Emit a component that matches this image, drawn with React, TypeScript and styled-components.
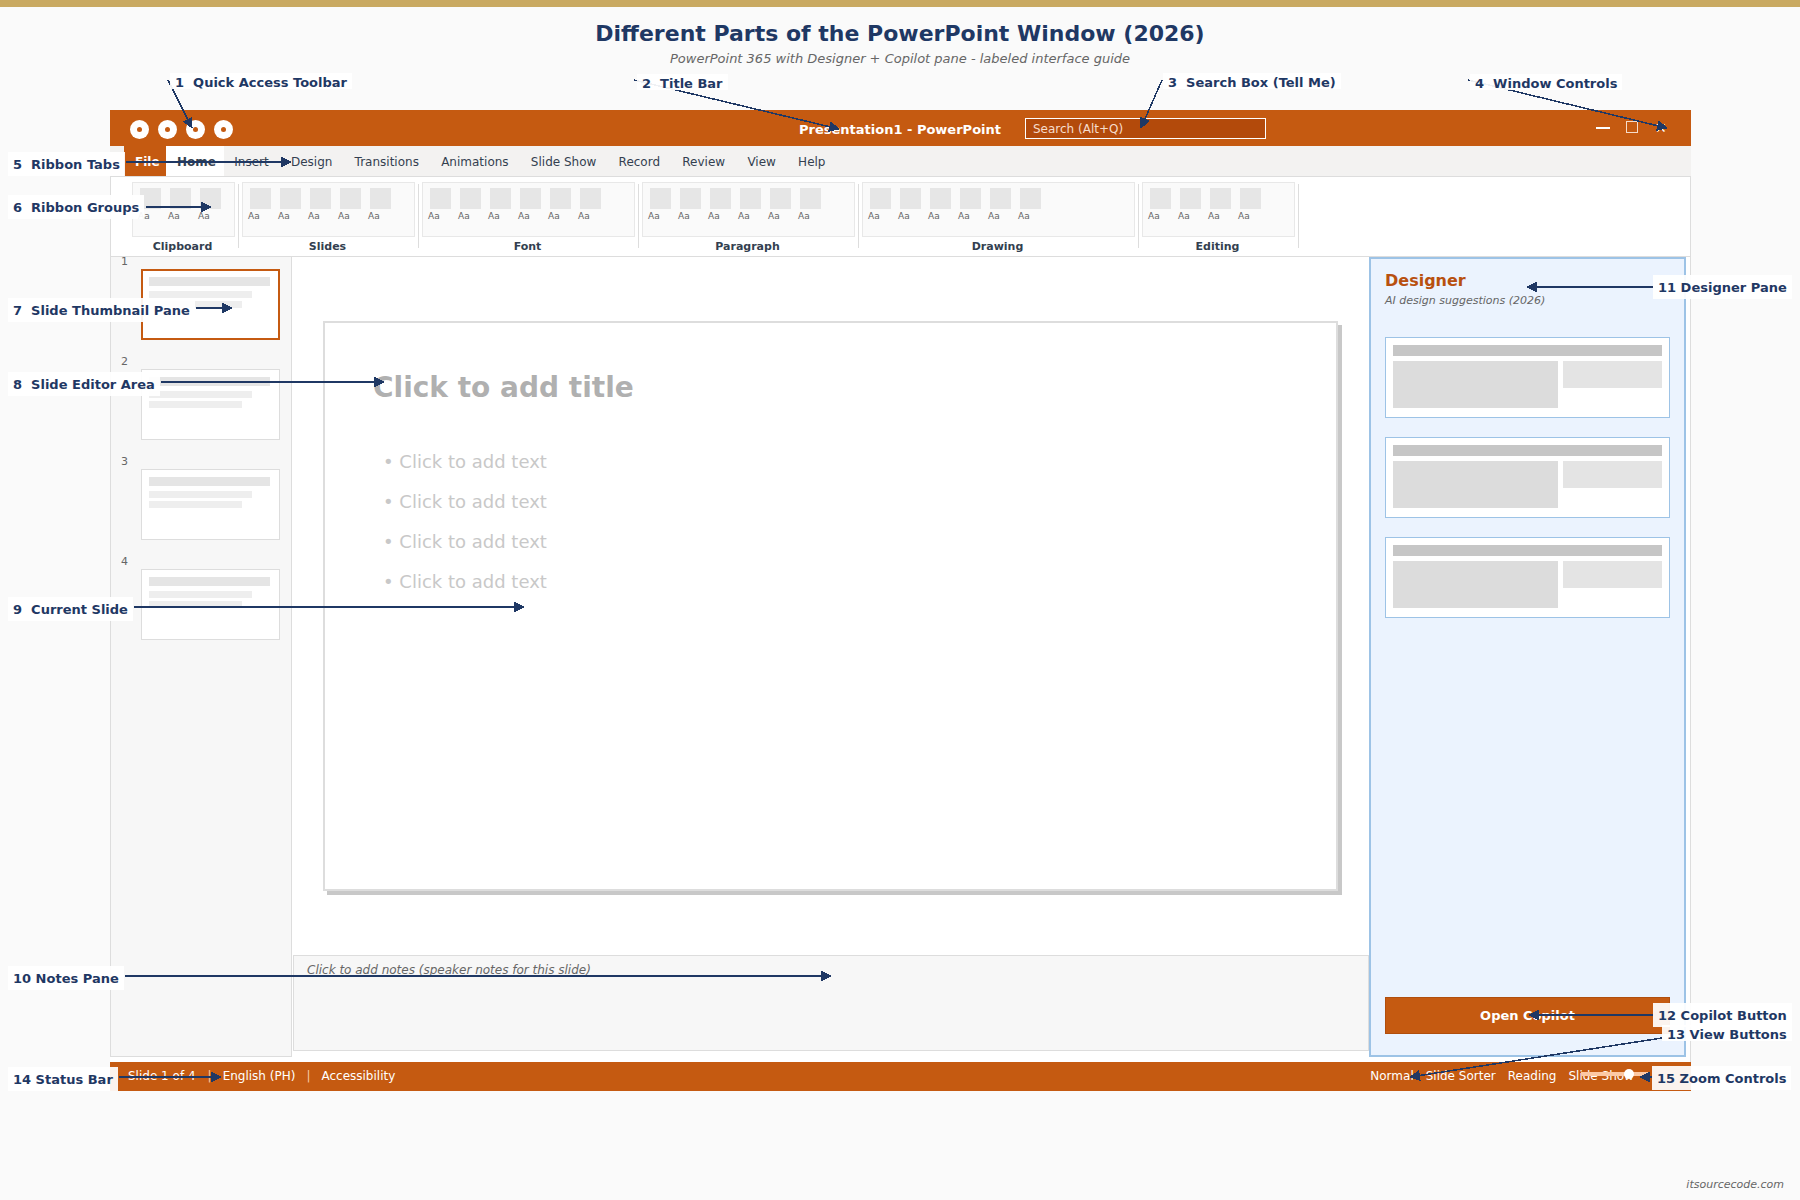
import styled, {createGlobalStyle} from "styled-components";

const ORANGE = "#c55a11";
const NAVY = "#1f3864";
const BLUE = "#9dc3e6";
const SLATE = "#333f50";

const GlobalStyle = createGlobalStyle`
  html, body {
    margin: 0;
    padding: 0;
    background: #fafafa;
  }
  * {
    box-sizing: border-box;
  }
`;

const Page = styled.div`
  position: relative;
  width: 1800px;
  height: 1200px;
  overflow: hidden;
  background: #fafafa;
  font-family: "DejaVu Sans", sans-serif;
`;
const TopStrip = styled.div`
  height: 7px;
  background: #c9a961;
`;
const Header = styled.header`
  height: 103px;
  text-align: center;
`;
const MainTitle = styled.h1`
  margin: 0;
  padding-top: 13px;
  font-size: 22px;
  line-height: 28px;
  font-weight: 700;
  color: ${NAVY};
`;
const SubTitle = styled.p`
  margin: 3px 0 0;
  font-size: 13px;
  line-height: 16px;
  font-style: italic;
  color: #666;
`;

const Window = styled.div`
  width: 1581px;
  margin-left: 110px;
`;
const TitleBar = styled.div`
  display: flex;
  align-items: flex-start;
  height: 36px;
  background: ${ORANGE};
`;
const QuickAccess = styled.div`
  display: flex;
  gap: 9px;
  width: 689px;
  margin-top: 10px;
  padding-left: 20px;
`;
const QuickDot = styled.span`
  display: flex;
  align-items: center;
  justify-content: center;
  width: 19px;
  height: 19px;
  border-radius: 50%;
  background: #fff;
  &::after {
    content: "";
    width: 5px;
    height: 5px;
    border-radius: 50%;
    background: ${ORANGE};
  }
`;
const DocTitle = styled.div`
  width: 202px;
  margin-top: 12px;
  font-size: 13px;
  font-weight: 700;
  line-height: 16px;
  color: #fff;
  text-align: center;
  white-space: nowrap;
`;
const SearchBox = styled.div`
  width: 241px;
  height: 21px;
  margin: 8px 0 0 24px;
  padding-left: 7px;
  border: 1px solid #fff;
  background: #b34a0b;
  font-size: 12px;
  line-height: 20px;
  color: #f6dccb;
`;
const WindowControls = styled.div`
  display: flex;
  align-items: flex-start;
  margin: 11px 0 0 330px;
`;
const MinButton = styled.span`
  width: 14px;
  height: 2px;
  margin-top: 6px;
  background: #fff;
`;
const MaxButton = styled.span`
  width: 12px;
  height: 12px;
  margin-left: 16px;
  border: 1px solid #f6dccb;
`;
const CloseButton = styled.span`
  margin-left: 17px;
  font-size: 14px;
  line-height: 14px;
  color: #fff;
`;

const TabRow = styled.nav`
  display: flex;
  height: 31px;
  padding-left: 14px;
  background: #f3f2f1;
  border-bottom: 1px solid #ddd;
`;
const Tab = styled.span`
  height: 30px;
  padding: 0 12px 0 10.25px;
  font-size: 12px;
  line-height: 32px;
  white-space: nowrap;
  color: ${SLATE};
`;
const FileTab = styled(Tab)`
  width: 42px;
  padding: 0 0 0 11px;
  font-weight: 700;
  color: #fff;
  background: ${ORANGE};
`;
const HomeTab = styled(Tab)`
  width: 58px;
  padding: 0 0 0 11px;
  font-weight: 700;
  background: #fff;
`;

const Ribbon = styled.div`
  display: flex;
  height: 80px;
  padding: 5px 0 0 21px;
  background: #fff;
  border-left: 1px solid #ddd;
  border-right: 1px solid #ddd;
  border-bottom: 1px solid #ddd;
`;
const RibbonGroup = styled.div<{$width: number}>`
  position: relative;
  width: ${(p) => p.$width}px;
  margin-right: 7px;
`;
const GroupBox = styled.div`
  display: flex;
  gap: 9px;
  height: 55px;
  padding: 5px 0 0 7px;
  background: #fafafa;
  border: 1px solid #e8e8e8;
`;
const RibbonItem = styled.div`
  width: 21px;
`;
const RibbonIcon = styled.div`
  height: 21px;
  background: #e6e6e6;
`;
const RibbonCaption = styled.div`
  margin: 2px 0 0 -2px;
  font-size: 9px;
  line-height: 10px;
  color: #666;
`;
const GroupLabel = styled.div`
  margin-top: 3px;
  padding-right: 2px;
  font-size: 11px;
  font-weight: 700;
  line-height: 13px;
  color: ${SLATE};
  text-align: center;
`;
const GroupSeparator = styled.span`
  position: absolute;
  top: 2px;
  right: -4px;
  width: 1px;
  height: 64px;
  background: #ddd;
`;

const Body = styled.div`
  display: flex;
  height: 805px;
  padding-right: 5px;
  background: #fff;
  border-right: 1px solid #ddd;
`;
const ThumbPane = styled.aside`
  flex: none;
  width: 182px;
  height: 800px;
  background: #f7f7f7;
  border: 1px solid #ddd;
  border-top: 0;
`;
const ThumbList = styled.div`
  margin-top: -2px;
`;
const ThumbItem = styled.div`
  height: 100px;
  padding-left: 30px;
`;
const ThumbNumber = styled.div`
  height: 14px;
  margin-left: -20px;
  font-size: 11px;
  line-height: 14px;
  color: #666;
`;
const Thumb = styled.div<{$current?: boolean}>`
  width: 139px;
  height: 71px;
  padding: ${(p) => (p.$current ? "6px" : "7px")};
  background: #fff;
  border: ${(p) => (p.$current ? `2px solid ${ORANGE}` : "1px solid #ddd")};
`;
const ThumbBar = styled.div<{$width: number; $strong?: boolean}>`
  width: ${(p) => p.$width}px;
  height: ${(p) => (p.$strong ? 9 : 7)}px;
  margin-bottom: ${(p) => (p.$strong ? 5 : 3)}px;
  background: ${(p) => (p.$strong ? "#e5e5e5" : "#eee")};
`;

const Editor = styled.main`
  flex: none;
  display: flex;
  flex-direction: column;
  width: 1077px;
  height: 800px;
`;
const SlideCanvas = styled.section`
  width: 1015px;
  height: 570px;
  margin: 64px 0 64px 31px;
  padding: 48px 0 0 48px;
  background: #fff;
  border: 2px solid #ddd;
  box-shadow: 4px 4px 0 #c8c8c8;
`;
const SlideTitle = styled.h2`
  margin: 0 0 37px;
  font-size: 28px;
  line-height: 34px;
  font-weight: 700;
  color: #b0b0b0;
`;
const SlideBullet = styled.div`
  height: 40px;
  padding-left: 10px;
  font-size: 18px;
  line-height: 40px;
  color: #c8c8c8;
`;
const NotesPane = styled.section`
  height: 96px;
  margin-left: 1px;
  padding: 7px 13px;
  background: #f7f7f7;
  border: 1px solid #ddd;
  font-size: 12px;
  font-style: italic;
  line-height: 15px;
  color: #666;
`;

const DesignerPane = styled.aside`
  flex: none;
  display: flex;
  flex-direction: column;
  width: 317px;
  height: 800px;
  padding: 13px 14px 21px;
  background: #ebf3fe;
  border: 2px solid ${BLUE};
`;
const DesignerTitle = styled.h3`
  margin: 0;
  font-size: 16px;
  line-height: 18px;
  font-weight: 700;
  color: #b8500f;
`;
const DesignerSub = styled.p`
  margin: 4px 0 0;
  font-size: 11px;
  font-style: italic;
  line-height: 14px;
  color: #666;
`;
const SuggestionList = styled.div`
  display: flex;
  flex-direction: column;
  gap: 19px;
  margin-top: 29px;
`;
const SuggestionCard = styled.div`
  display: grid;
  grid-template-columns: 165px 99px;
  grid-template-rows: 11px 27px 20px;
  column-gap: 5px;
  row-gap: 5px;
  height: 81px;
  padding: 7px;
  background: #fff;
  border: 1px solid ${BLUE};
`;
const CardHeader = styled.div`
  grid-column: 1 / 3;
  background: #c6c6c6;
`;
const CardImage = styled.div`
  grid-row: 2 / 4;
  height: 47px;
  background: #dcdcdc;
`;
const CardText = styled.div`
  background: #e4e4e4;
`;
const CopilotButton = styled.button`
  width: 285px;
  height: 37px;
  margin-top: auto;
  padding: 0;
  background: ${ORANGE};
  border: 1px solid #b04e0d;
  font-family: inherit;
  font-size: 13px;
  font-weight: 700;
  color: #fff;
`;

const StatusBar = styled.footer`
  position: relative;
  display: flex;
  align-items: center;
  height: 29px;
  padding: 0 0 2px 18px;
  background: ${ORANGE};
  font-size: 12px;
  color: #fff;
`;
const StatusItem = styled.span<{$left: number}>`
  margin-left: ${(p) => p.$left}px;
  white-space: nowrap;
`;
const StatusDivider = styled.span<{$left: number}>`
  margin-left: ${(p) => p.$left}px;
  color: #f6c9a8;
`;
const ZoomTrack = styled.div`
  position: absolute;
  left: 1471px;
  top: 10px;
  width: 69px;
  height: 4px;
  background: #fcc8a4;
`;
const ZoomKnob = styled.span`
  position: absolute;
  left: 43px;
  top: -3px;
  width: 10px;
  height: 10px;
  border-radius: 50%;
  background: #fff;
`;

const ArrowLayer = styled.svg`
  position: absolute;
  left: 0;
  top: 0;
  pointer-events: none;
`;
const Callout = styled.div<{$x: number; $y: number; $compact?: boolean}>`
  position: absolute;
  left: ${(p) => p.$x - 5}px;
  top: ${(p) => p.$y - (p.$compact ? 10 : 13)}px;
  height: ${(p) => (p.$compact ? 16 : 24)}px;
  padding: ${(p) => (p.$compact ? "0 5px" : "3px 5px 1px")};
  background: rgba(255, 255, 255, 0.93);
  font-size: 13px;
  font-weight: 700;
  line-height: 20px;
  white-space: pre;
  color: ${NAVY};
`;
const Watermark = styled.div`
  position: absolute;
  right: 16px;
  bottom: 9px;
  font-size: 11px;
  font-style: italic;
  color: #666;
`;

const tabs = [
  "Insert",
  "Design",
  "Transitions",
  "Animations",
  "Slide Show",
  "Record",
  "Review",
  "View",
  "Help",
];
const groups = [
  {name: "Clipboard", width: 103, count: 3},
  {name: "Slides", width: 173, count: 5},
  {name: "Font", width: 213, count: 6},
  {name: "Paragraph", width: 213, count: 6},
  {name: "Drawing", width: 273, count: 6},
  {name: "Editing", width: 153, count: 4},
];
const callouts = [
  {x: 175, y: 83, text: "1  Quick Access Toolbar", compact: true},
  {x: 642, y: 84, text: "2  Title Bar", compact: true},
  {x: 1168, y: 83, text: "3  Search Box (Tell Me)", compact: true},
  {x: 1475, y: 84, text: "4  Window Controls", compact: true},
  {x: 13, y: 165, text: "5  Ribbon Tabs"},
  {x: 13, y: 208, text: "6  Ribbon Groups"},
  {x: 13, y: 311, text: "7  Slide Thumbnail Pane"},
  {x: 13, y: 385, text: "8  Slide Editor Area"},
  {x: 13, y: 610, text: "9  Current Slide"},
  {x: 13, y: 979, text: "10 Notes Pane"},
  {x: 1658, y: 288, text: "11 Designer Pane"},
  {x: 1658, y: 1016, text: "12 Copilot Button"},
  {x: 1667, y: 1035, text: "13 View Buttons", compact: true},
  {x: 13, y: 1080, text: "14 Status Bar"},
  {x: 1657, y: 1079, text: "15 Zoom Controls"},
];
const arrows = [
  [168, 80, 192, 128],
  [634, 80, 839, 129],
  [1162, 80, 1141, 128],
  [1468, 80, 1667, 128],
  [126, 162, 291, 162],
  [146, 207, 211, 207],
  [196, 308, 232, 308],
  [161, 382, 384, 382],
  [134, 607, 524, 607],
  [125, 976, 831, 976],
  [1653, 287, 1527, 287],
  [1653, 1015, 1529, 1015],
  [1662, 1038, 1410, 1077],
  [119, 1077, 221, 1077],
  [1652, 1077, 1640, 1077],
];

export default function App() {
  return (
    <Page>
      <GlobalStyle />
      <TopStrip />
      <Header>
        <MainTitle>Different Parts of the PowerPoint Window (2026)</MainTitle>
        <SubTitle>PowerPoint 365 with Designer + Copilot pane - labeled interface guide</SubTitle>
      </Header>
      <Window>
        <TitleBar>
          <QuickAccess>
            <QuickDot />
            <QuickDot />
            <QuickDot />
            <QuickDot />
          </QuickAccess>
          <DocTitle>Presentation1 - PowerPoint</DocTitle>
          <SearchBox>Search (Alt+Q)</SearchBox>
          <WindowControls>
            <MinButton />
            <MaxButton />
            <CloseButton>✕</CloseButton>
          </WindowControls>
        </TitleBar>
        <TabRow>
          <FileTab>File</FileTab>
          <HomeTab>Home</HomeTab>
          {tabs.map((tab) => (
            <Tab key={tab}>{tab}</Tab>
          ))}
        </TabRow>
        <Ribbon>
          {groups.map((group) => (
            <RibbonGroup key={group.name} $width={group.width}>
              <GroupBox>
                {Array.from({length: group.count}, (_, i) => (
                  <RibbonItem key={i}>
                    <RibbonIcon />
                    <RibbonCaption>Aa</RibbonCaption>
                  </RibbonItem>
                ))}
              </GroupBox>
              <GroupLabel>{group.name}</GroupLabel>
              <GroupSeparator />
            </RibbonGroup>
          ))}
        </Ribbon>
        <Body>
          <ThumbPane>
            <ThumbList>
              {[1, 2, 3, 4].map((n) => (
                <ThumbItem key={n}>
                  <ThumbNumber>{n}</ThumbNumber>
                  <Thumb $current={n === 1}>
                    <ThumbBar $width={121} $strong />
                    <ThumbBar $width={103} />
                    <ThumbBar $width={93} />
                  </Thumb>
                </ThumbItem>
              ))}
            </ThumbList>
          </ThumbPane>
          <Editor>
            <SlideCanvas>
              <SlideTitle>Click to add title</SlideTitle>
              {[1, 2, 3, 4].map((n) => (
                <SlideBullet key={n}>• Click to add text</SlideBullet>
              ))}
            </SlideCanvas>
            <NotesPane>Click to add notes (speaker notes for this slide)</NotesPane>
          </Editor>
          <DesignerPane>
            <DesignerTitle>Designer</DesignerTitle>
            <DesignerSub>AI design suggestions (2026)</DesignerSub>
            <SuggestionList>
              {[1, 2, 3].map((n) => (
                <SuggestionCard key={n}>
                  <CardHeader />
                  <CardImage />
                  <CardText />
                </SuggestionCard>
              ))}
            </SuggestionList>
            <CopilotButton>Open Copilot</CopilotButton>
          </DesignerPane>
        </Body>
        <StatusBar>
          <StatusItem $left={0}>Slide 1 of 4</StatusItem>
          <StatusDivider $left={12}>|</StatusDivider>
          <StatusItem $left={11}>English (PH)</StatusItem>
          <StatusDivider $left={11}>|</StatusDivider>
          <StatusItem $left={11}>Accessibility</StatusItem>
          <StatusItem $left={975}>Normal</StatusItem>
          <StatusItem $left={12}>Slide Sorter</StatusItem>
          <StatusItem $left={12}>Reading</StatusItem>
          <StatusItem $left={12}>Slide Show</StatusItem>
          <ZoomTrack>
            <ZoomKnob />
          </ZoomTrack>
        </StatusBar>
      </Window>
      <ArrowLayer width="1800" height="1200" viewBox="0 0 1800 1200" shapeRendering="crispEdges">
        <defs>
          <marker id="head" markerWidth="11" markerHeight="11" refX="10" refY="5.5" orient="auto" markerUnits="userSpaceOnUse">
            <path d="M0 0 L11 5.5 L0 11 Z" fill={NAVY} />
          </marker>
        </defs>
        {arrows.map(([x1, y1, x2, y2], i) => (
          <line
            key={i}
            x1={x1}
            y1={y1}
            x2={x2}
            y2={y2}
            stroke={NAVY}
            strokeWidth={y1 === y2 ? 2 : 1.5}
            markerEnd="url(#head)"
          />
        ))}
      </ArrowLayer>
      {callouts.map((c) => (
        <Callout key={c.text} $x={c.x} $y={c.y} $compact={c.compact}>
          {c.text}
        </Callout>
      ))}
      <Watermark>itsourcecode.com</Watermark>
    </Page>
  );
}
